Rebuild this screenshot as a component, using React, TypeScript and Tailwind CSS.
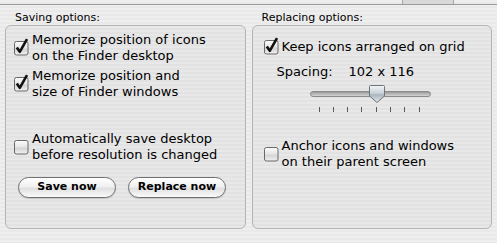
const font = "font-['DejaVu_Sans','Liberation_Sans',sans-serif]";

const CheckBox = ({ checked }: { checked?: boolean }) => (
  <svg width="16" height="16" viewBox="0 0 16 16" className="shrink-0 overflow-visible">
    <defs>
      <linearGradient id="cbg" x1="0" y1="0" x2="0" y2="1">
        <stop offset="0" stopColor="#fdfdfd" />
        <stop offset="0.5" stopColor="#e4e4e4" />
        <stop offset="0.55" stopColor="#d2d2d2" />
        <stop offset="1" stopColor="#f2f2f2" />
      </linearGradient>
    </defs>
    <rect x="1.5" y="1.5" width="13.5" height="13.5" rx="2" fill="url(#cbg)" stroke="#686868" />
    {checked && (
      <path d="M3.8 7.4 L6.8 11.8 L14 -0.8" fill="none" stroke="#111" strokeWidth="2.6" strokeLinejoin="round" />
    )}
  </svg>
);

const Option = ({ checked, lines }: { checked?: boolean; lines: string[] }) => (
  <div className="flex items-center gap-[3px]">
    <CheckBox checked={checked} />
    <div className="text-[13px] leading-[16px] text-black">
      {lines.map((l) => (
        <div key={l}>{l}</div>
      ))}
    </div>
  </div>
);

const PillButton = ({ label }: { label: string }) => (
  <button className="h-[21px] w-[98px] rounded-full border border-[#6f6f6f] bg-[linear-gradient(to_bottom,#ffffff,#f0f0f0_45%,#e0e0e0_55%,#fafafa)] text-[11px] font-bold text-black shadow-[0_1px_1px_rgba(0,0,0,0.15)]">
    {label}
  </button>
);

const Box = ({ children }: { children: React.ReactNode }) => (
  <div className="h-[204px] rounded-[6px] border border-[#b4b4b4] bg-[repeating-linear-gradient(to_bottom,#e8e8e8_0px,#e8e8e8_2px,#e2e2e2_2px,#e2e2e2_4px)]">
    {children}
  </div>
);

const Slider = () => {
  const ticks = [0, 1, 2, 3, 4, 5, 6, 7];
  return (
    <div className="relative ml-[47px] h-[28px] w-[121px]">
      <div className="absolute left-0 top-[5px] h-[6px] w-[121px] rounded-full border border-[#8a8a8a] bg-[linear-gradient(to_bottom,#9a9a9a,#d4d4d4)]" />
      {ticks.map((i) => (
        <div
          key={i}
          className="absolute top-[21px] h-[5px] w-px bg-[#5a5a5a]"
          style={{ left: 9 + i * 14.3 }}
        />
      ))}
      <svg width="18" height="20" viewBox="0 0 18 20" className="absolute left-[58px] top-[-2px]">
        <defs>
          <linearGradient id="thumb" x1="0" y1="0" x2="0" y2="1">
            <stop offset="0" stopColor="#f4f6f8" />
            <stop offset="0.45" stopColor="#c9d1d9" />
            <stop offset="0.55" stopColor="#aab4be" />
            <stop offset="1" stopColor="#e6ebf0" />
          </linearGradient>
        </defs>
        <path d="M2.5 1.5 H15.5 Q16.5 1.5 16.5 2.5 V12 L9 18.5 L1.5 12 V2.5 Q1.5 1.5 2.5 1.5 Z" fill="url(#thumb)" stroke="#6f7478" />
      </svg>
    </div>
  );
};

export default function App() {
  return (
    <div
      className={`${font} relative h-[243px] w-[497px] overflow-hidden bg-[repeating-linear-gradient(to_bottom,#eeeeee_0px,#eeeeee_2px,#e9e9e9_2px,#e9e9e9_4px)] text-black`}
    >
      {/* tab strip remnant */}
      <div className="flex h-[5px] border-b border-[#9a9a9a]">
        <div className="ml-[402px] h-full w-[52px] border-x border-[#a8a8a8] bg-[#d8d8d8]" />
      </div>

      <div className="flex gap-[6px] px-[5px] pt-[5px]">
        {/* left */}
        <div className="flex w-[241px] flex-col">
          <div className="ml-[10px] h-[15px] pt-[1px] text-[11px] leading-[14px]">Saving options:</div>
          <Box>
            <div className="flex flex-col pl-[7px] pt-[6px]">
              <Option checked lines={["Memorize position of icons", "on the Finder desktop"]} />
              <div className="h-[4px]" />
              <Option checked lines={["Memorize position and", "size of Finder windows"]} />
              <div className="h-[31px]" />
              <Option lines={["Automatically save desktop", "before resolution is changed"]} />
              <div className="mt-[14px] flex gap-[12px] pl-[5px]">
                <PillButton label="Save now" />
                <PillButton label="Replace now" />
              </div>
            </div>
          </Box>
        </div>

        {/* right */}
        <div className="flex w-[241px] flex-col">
          <div className="ml-[10px] h-[15px] pt-[1px] text-[11px] leading-[14px]">Replacing options:</div>
          <Box>
            <div className="flex flex-col pl-[10px] pt-[13px]">
              <Option checked lines={["Keep icons arranged on grid"]} />
              <div className="ml-[14px] mt-[9px] flex text-[13px] leading-[16px]">
                <span className="w-[72px]">Spacing:</span>
                <span>102 x 116</span>
              </div>
              <div className="mt-[6px]">
                <Slider />
              </div>
              <div className="h-[24px]" />
              <Option lines={["Anchor icons and windows", "on their parent screen"]} />
            </div>
          </Box>
        </div>
      </div>
    </div>
  );
}
